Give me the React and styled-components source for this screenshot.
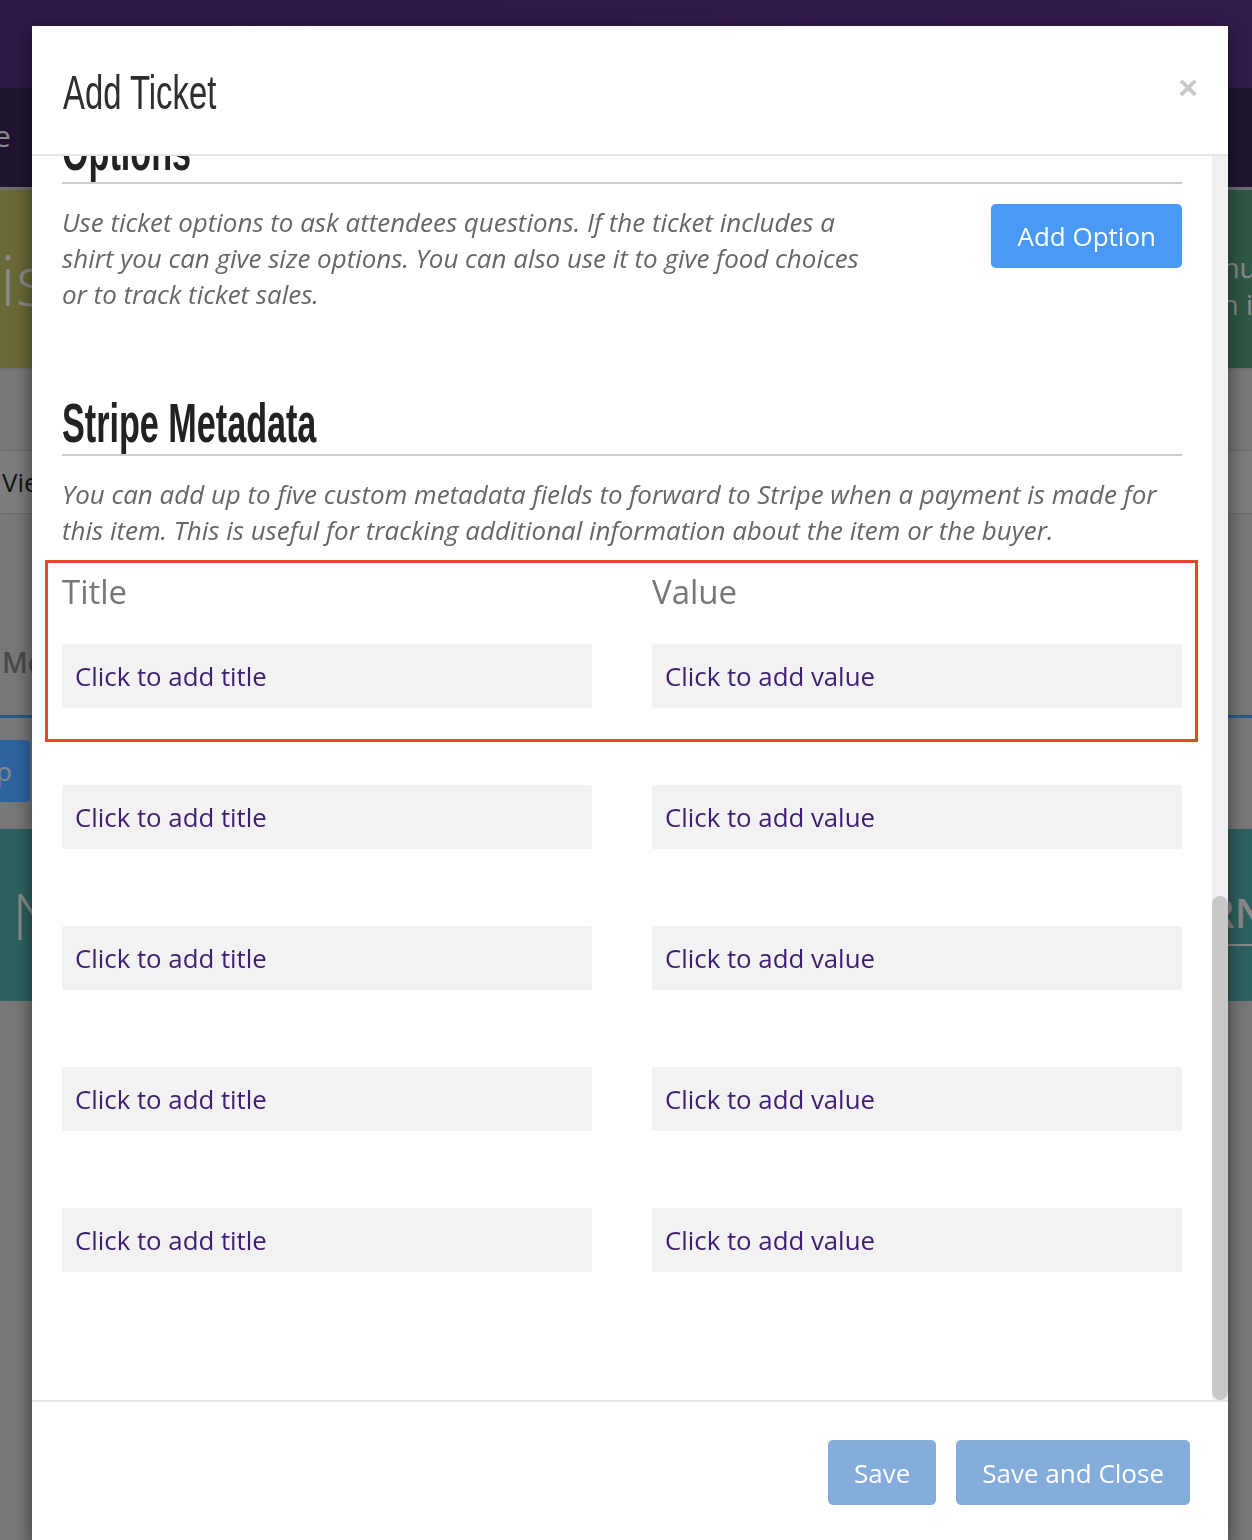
import React, { useLayoutEffect, useRef, useState } from 'react'
import styled, { createGlobalStyle } from 'styled-components'

const GlobalStyle = createGlobalStyle`
  html, body {
    margin: 0;
    padding: 0;
  }

  body {
    font-family: 'Open Sans', 'Liberation Sans', sans-serif;
    background: #7a7a7a;
    overflow: hidden;
  }

  * {
    box-sizing: border-box;
  }
`

/* ---------- dimmed page behind the dialog ---------- */

const Page = styled.div`
  height: 1540px;
  overflow: hidden;
  background: #787878;
`

const TopBar = styled.div`
  height: 88px;
  background: linear-gradient(90deg, #2f1948, #331c4e);
`

const SubBar = styled.div`
  height: 102px;
  background: #1f1530;
  display: flex;
  align-items: center;
  color: #8a8a8a;
  font-size: 30px;
  border-bottom: 3px solid #6e6e6e;
`

const SubBarItem = styled.span`
  margin-left: -74px;
  margin-top: -4px;
`

const Tiles = styled.div`
  display: grid;
  grid-template-columns: 1fr 1fr;
  height: 180px;
  border-bottom: 2px solid #707070;
`

const Tile = styled.div`
  background: ${p => p.$bg};
  display: flex;
  flex-direction: column;
  justify-content: center;
  align-items: ${p => (p.$end ? 'flex-end' : 'flex-start')};
  color: #8c8c8c;
  overflow: hidden;
`

const TileBig = styled.span`
  font-size: 70px;
  font-weight: 300;
  margin-left: -36px;
  white-space: nowrap;
`

const TileText = styled.div`
  width: 62px;
  font-size: 28px;
  line-height: 37px;
  white-space: nowrap;
  margin-top: 14px;
`

const Listing = styled.div`
  margin-top: 80px;
  height: 64px;
  display: flex;
  align-items: center;
  padding-left: 2px;
  background: #7d7d7d;
  border-top: 1px solid #6c6c6c;
  border-bottom: 1px solid #6c6c6c;
  color: #151515;
  font-size: 26px;
`

const MembersTitle = styled.div`
  margin-top: 128px;
  padding-left: 2px;
  color: #4a4a4a;
  font-size: 28px;
  font-weight: 600;
  height: 40px;
  line-height: 40px;
`

const BlueRule = styled.div`
  margin-top: 33px;
  height: 3px;
  background: #2a5a8c;
`

const BlueButton = styled.div`
  margin-top: 22px;
  width: 90px;
  height: 62px;
  margin-left: -60px;
  background: #2d64a0;
  border-radius: 4px;
  color: #8a8a8a;
  font-size: 26px;
  display: flex;
  align-items: center;
  justify-content: flex-end;
  padding-right: 18px;
`

const TealBand = styled.div`
  margin-top: 27px;
  height: 172px;
  background: #2e6161;
  display: flex;
  align-items: center;
  justify-content: space-between;
  color: #8a8a8a;
  font-size: 64px;
  font-weight: 300;
  overflow: hidden;
`

const TealLeft = styled.span`
  margin-left: 12px;
`

const TealRight = styled.span`
  font-size: 40px;
  font-weight: 600;
  margin-right: -14px;
  padding-bottom: 4px;
  border-bottom: 2px solid #8a8a8a;
`

/* ---------- dialog ---------- */

const Modal = styled.div`
  position: fixed;
  top: 26px;
  left: 32px;
  width: 1196px;
  background: #fff;
  box-shadow: 0 5px 18px rgba(0, 0, 0, 0.55);
`

const Header = styled.div`
  height: 130px;
  padding: 0 30px 0 31px;
  display: flex;
  align-items: center;
  justify-content: space-between;
  border-bottom: 2px solid #e5e5e5;
`

/* Oswald-like narrow display face, squeezed from Liberation Sans */
const Narrow = styled.span`
  display: inline-block;
  transform: scaleX(${p => p.$squeeze});
  transform-origin: left center;
  white-space: nowrap;
`

const ModalTitle = styled.h4`
  margin: 0;
  padding-top: 4px;
  font-family: 'Liberation Sans', Arial, sans-serif;
  font-weight: 400;
  font-size: 49px;
  line-height: 1;
  color: #2e2e2e;
`

const Close = styled.button`
  border: 0;
  background: none;
  padding: 0 0 6px;
  font-family: 'Liberation Sans', sans-serif;
  font-size: 34px;
  font-weight: 700;
  line-height: 1;
  color: #c8c8c8;
  cursor: pointer;
`

const Body = styled.div`
  height: 1244px;
  display: flex;
`

const ScrollArea = styled.div`
  flex: 1;
  min-width: 0;
  overflow: hidden;
  padding: 0 30px;
`

const ScrollTrack = styled.div`
  width: 16px;
  flex: none;
  background: #f0f0f0;
`

const ScrollThumb = styled.div`
  width: 16px;
  border-radius: 8px;
  background: #c8c8c8;
`

/* fields above the visible part of the scrolled form */
const EarlierFields = styled.div`
  height: 1790px;
`

const SectionTitle = styled.h3`
  margin: 0;
  height: 66px;
  padding-bottom: 3px;
  display: flex;
  align-items: flex-end;
  font-family: 'Liberation Sans', Arial, sans-serif;
  font-weight: 700;
  font-size: 56px;
  line-height: 1;
  color: #222;
  border-bottom: 2px solid #cccccc;
`

const Section = styled.section`
  & + & {
    margin-top: 78px;
  }
`

const OptionsRow = styled.div`
  margin-top: 20px;
  display: flex;
  justify-content: space-between;
  align-items: flex-start;
`

const Help = styled.p`
  margin: 0;
  max-width: ${p => p.$width || 'none'};
  font-style: italic;
  font-size: 25.95px;
  line-height: 36px;
  color: #666;
`

const PrimaryButton = styled.button`
  height: 64px;
  padding: 0 26px;
  border: 0;
  border-radius: 5px;
  background: ${p => (p.$muted ? '#84addb' : '#489af5')};
  color: #fff;
  font-family: 'Open Sans', sans-serif;
  font-size: 26px;
  white-space: nowrap;
  cursor: pointer;
`

const MetaHelp = styled(Help)`
  margin-top: 20px;
`

const MetaRows = styled.div`
  margin-top: 19px;
  padding-bottom: 128px;
  display: flex;
  flex-direction: column;
  gap: 77px;
`

const MetaRow = styled.div`
  position: relative;
  display: grid;
  grid-template-columns: 1fr 1fr;
  column-gap: 60px;

  ${p => p.$highlight && `
    &::after {
      content: '';
      position: absolute;
      top: -7px;
      left: -17px;
      right: -16px;
      bottom: -34px;
      border: 3px solid #e8452c;
      pointer-events: none;
    }
  `}
`

const Field = styled.div`
  display: flex;
  flex-direction: column;
`

const Label = styled.label`
  font-size: 33px;
  line-height: 50px;
  color: #777;
  margin-bottom: 27px;
`

const Editable = styled.div`
  height: 64px;
  padding: 0 13px;
  display: flex;
  align-items: center;
  background: #f2f2f2;
  border-radius: 2px;
  color: #3f1d70;
  font-size: 25.8px;
  cursor: text;
`

const Footer = styled.div`
  padding: 38px 38px 38px;
  border-top: 2px solid #e5e5e5;
  display: flex;
  justify-content: flex-end;
  gap: 20px;
`

const FooterButton = styled(PrimaryButton)`
  height: 65px;
`

const metadata = [0, 1, 2, 3, 4]

const App = () => {
  const areaRef = useRef()
  const [thumb, setThumb] = useState({ top: 0, height: 0 })

  useLayoutEffect(() => {
    const el = areaRef.current
    if (!el) return
    el.scrollTop = el.scrollHeight
    const view = el.clientHeight
    const total = el.scrollHeight
    setThumb({
      top: (el.scrollTop / total) * view,
      height: (view * view) / total
    })
  }, [])

  return (
    <>
      <GlobalStyle />
      <Page>
        <TopBar />
        <SubBar>
          <SubBarItem>Home</SubBarItem>
        </SubBar>
        <Tiles>
          <Tile $bg="#6a6a38">
            <TileBig>List</TileBig>
          </Tile>
          <Tile $bg="#2f5847" $end>
            <TileText>
              Venue
              <br />
              Join in
            </TileText>
          </Tile>
        </Tiles>
        <Listing>View</Listing>
        <MembersTitle>Members</MembersTitle>
        <BlueRule />
        <BlueButton>Setup</BlueButton>
        <TealBand>
          <TealLeft>N</TealLeft>
          <TealRight>LEARN</TealRight>
        </TealBand>
      </Page>

      <Modal role="dialog">
        <Header>
          <ModalTitle>
            <Narrow $squeeze={0.67}>Add Ticket</Narrow>
          </ModalTitle>
          <Close aria-label="Close">×</Close>
        </Header>

        <Body>
          <ScrollArea ref={areaRef}>
            <EarlierFields />

            <Section>
              <SectionTitle>
                <Narrow $squeeze={0.61}>Options</Narrow>
              </SectionTitle>
              <OptionsRow>
                <Help $width="810px">
                  Use ticket options to ask attendees questions. If the ticket includes a
                  shirt you can give size options. You can also use it to give food choices
                  or to track ticket sales.
                </Help>
                <PrimaryButton type="button">Add Option</PrimaryButton>
              </OptionsRow>
            </Section>

            <Section>
              <SectionTitle>
                <Narrow $squeeze={0.61}>Stripe Metadata</Narrow>
              </SectionTitle>
              <MetaHelp>
                You can add up to five custom metadata fields to forward to Stripe when a
                payment is made for this item. This is useful for tracking additional
                information about the item or the buyer.
              </MetaHelp>
              <MetaRows>
                {metadata.map(i => (
                  <MetaRow key={i} $highlight={i === 0}>
                    <Field>
                      {i === 0 && <Label>Title</Label>}
                      <Editable>Click to add title</Editable>
                    </Field>
                    <Field>
                      {i === 0 && <Label>Value</Label>}
                      <Editable>Click to add value</Editable>
                    </Field>
                  </MetaRow>
                ))}
              </MetaRows>
            </Section>
          </ScrollArea>

          <ScrollTrack>
            <ScrollThumb style={{ marginTop: thumb.top, height: thumb.height }} />
          </ScrollTrack>
        </Body>

        <Footer>
          <FooterButton type="button" $muted>Save</FooterButton>
          <FooterButton type="button" $muted>Save and Close</FooterButton>
        </Footer>
      </Modal>
    </>
  )
}

export default App
